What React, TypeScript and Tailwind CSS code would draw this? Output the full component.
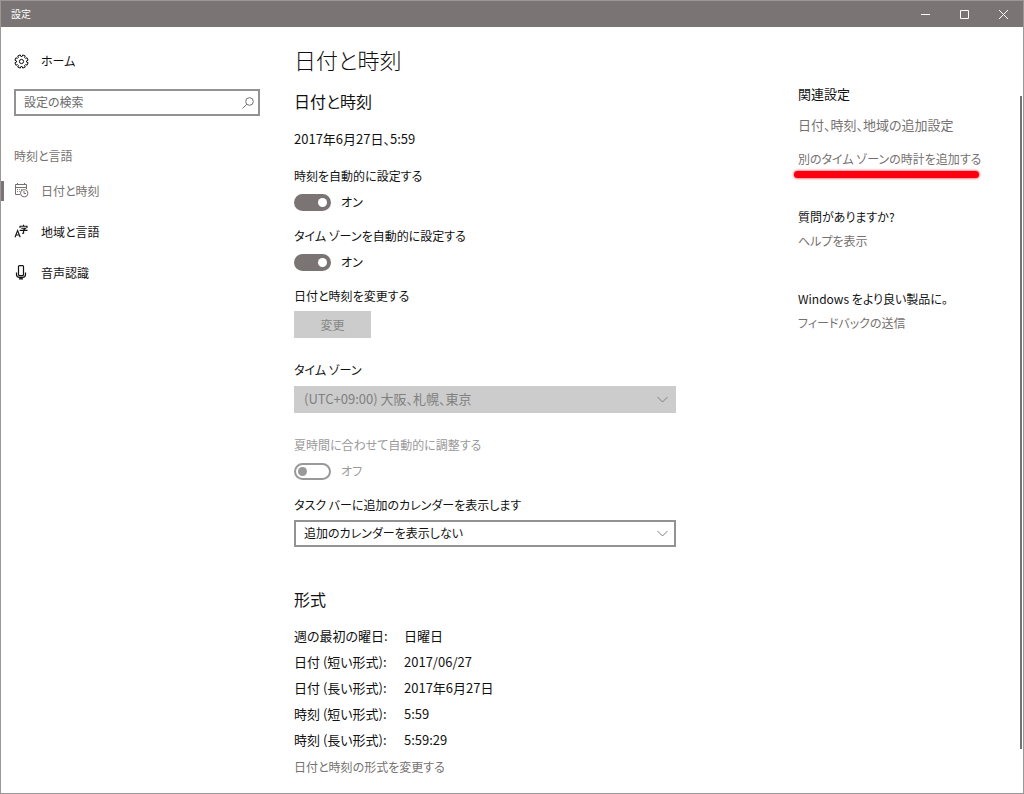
import React, { useState } from 'react';
import clsx from 'clsx';

const navItems = [
  { id: 'datetime', label: '日付と時刻', icon: CalendarClockIcon },
  { id: 'region', label: '地域と言語', icon: LanguageIcon },
  { id: 'speech', label: '音声認識', icon: MicIcon },
];

const formats = [
  { label: '週の最初の曜日:', value: '日曜日' },
  { label: '日付 (短い形式):', value: '2017/06/27' },
  { label: '日付 (長い形式):', value: '2017年6月27日' },
  { label: '時刻 (短い形式):', value: '5:59' },
  { label: '時刻 (長い形式):', value: '5:59:29' },
];

// Eight flat teeth, four points each
const gearPoints = Array.from({ length: 8 }, (_, i) =>
  [
    [-0.27, 5.1],
    [-0.2, 6.7],
    [0.2, 6.7],
    [0.27, 5.1],
  ].map(([offset, r]) => {
    const a = (i * Math.PI) / 4 + Math.PI / 8 + offset;
    return `${(7.5 + r * Math.cos(a)).toFixed(2)},${(7.5 + r * Math.sin(a)).toFixed(2)}`;
  }).join(' ')
).join(' ');

function GearIcon() {
  return (
    <svg width="15" height="15" viewBox="0 0 15 15" fill="none" stroke="currentColor" strokeLinejoin="round">
      <polygon points={gearPoints} />
      <circle cx="7.5" cy="7.5" r="2.1" />
    </svg>
  );
}

function CalendarClockIcon() {
  return (
    <svg width="15" height="15" viewBox="0 0 15 15" fill="none" stroke="currentColor">
      <path d="M6 11.5H1.5v-10h11V6M1.5 4.5h11M3.5 0v2M10.5 0v2" />
      <path d="M3 6.5h1M5 6.5h1M7 6.5h1M3 8.5h1M5 8.5h1" strokeWidth="0.8" />
      <circle cx="10.2" cy="10.2" r="3.7" />
      <path d="M10 8v2.5h2" />
    </svg>
  );
}

function LanguageIcon() {
  return (
    <svg width="15" height="15" viewBox="0 0 15 15" fill="none" stroke="currentColor">
      <path d="M1 13.2 3.6 6.5 6.2 13.2M1.9 11h3.4" strokeWidth="1.1" />
      <path d="M6 3.9V2.3h7v1.6M9.5.8v1.5M7.3 4.3h4.2L9.6 5.8M5.7 6.4h7.8M9.6 5.8v3.4H8" strokeWidth="1.1" />
    </svg>
  );
}

function MicIcon() {
  return (
    <svg width="15" height="15" viewBox="0 0 15 15" fill="none" stroke="currentColor" strokeWidth="1.2">
      <rect x="4.5" y="0.6" width="5" height="10" rx="1" />
      <path d="M2.5 7.5v2q0 2.8 3 2.8h3q3 0 3-2.8v-2M7 12.3v1.7M5 13.8h4" />
    </svg>
  );
}

function ChevronIcon() {
  return (
    <svg
      className="absolute right-2 top-2 pointer-events-none text-[#808080]"
      width="11"
      height="11"
      viewBox="0 0 11 11"
      fill="none"
      stroke="currentColor"
    >
      <path d="M0.5 3 5.5 8l5-5" />
    </svg>
  );
}

function Toggle({ label, defaultOn = false, disabled = false }: { label: string; defaultOn?: boolean; disabled?: boolean }) {
  const [on, setOn] = useState(defaultOn);

  return (
    <label className={clsx('block text-[12px] leading-5', disabled && 'text-[#999999]')}>
      <span className="block">{label}</span>
      <span className="mt-1.5 flex h-5 items-center gap-2.5">
        <input
          type="checkbox"
          role="switch"
          checked={on}
          disabled={disabled}
          onChange={(e) => setOn(e.target.checked)}
          className="flex h-[17px] w-[37px] appearance-none items-center rounded-full border-2 border-[#999999] px-0.5 before:size-[9px] before:rounded-full before:bg-[#999999] checked:justify-end checked:border-[#7a7574] checked:bg-[#7a7574] checked:before:bg-white"
        />
        <span>{on ? 'オン' : 'オフ'}</span>
      </span>
    </label>
  );
}

export default function App() {
  const [active, setActive] = useState('datetime');

  return (
    <div className="flex min-h-screen flex-col border border-[#9a9796] bg-white font-['Noto_Sans_CJK_JP',sans-serif] text-[13px] leading-5 text-[#111111] [font-feature-settings:'palt']">
      <header className="flex h-[26px] items-center justify-between bg-[#7a7574] pl-2.5 text-white">
        <span className="text-[10px]">設定</span>
        <div className="flex h-full">
          <button aria-label="最小化" className="flex w-[39px] items-center justify-center">
            <svg width="9" height="9" viewBox="0 0 9 9" stroke="currentColor">
              <path d="M0 4.5h9" />
            </svg>
          </button>
          <button aria-label="最大化" className="flex w-[39px] items-center justify-center">
            <svg width="9" height="9" viewBox="0 0 9 9" fill="none" stroke="currentColor">
              <path d="M0.5 0.5h8v8h-8z" />
            </svg>
          </button>
          <button aria-label="閉じる" className="flex w-[39px] items-center justify-center">
            <svg width="9" height="9" viewBox="0 0 9 9" stroke="currentColor">
              <path d="m0 0 9 9M9 0 0 9" />
            </svg>
          </button>
        </div>
      </header>

      <div className="flex flex-1">
        {/* Sidebar */}
        <nav className="w-[259px] shrink-0 pt-3.5">
          <a href="#home" className="flex h-10 items-center gap-3 pl-[13px] text-[12px]">
            <GearIcon />
            ホーム
          </a>
          <div className="relative mt-2 ml-[13px]">
            <input
              type="text"
              aria-label="設定の検索"
              placeholder="設定の検索"
              className="block h-[27px] w-full border-2 border-[#929292] pl-2 pr-7 pb-0.5 text-[12px] placeholder:text-[#6a6a6a]"
            />
            <svg
              className="absolute right-1.5 top-2 text-[#707070]"
              width="12"
              height="12"
              viewBox="0 0 12 12"
              fill="none"
              stroke="currentColor"
            >
              <circle cx="7.5" cy="4.5" r="3.8" />
              <path d="M4.8 7.2.5 11.5" />
            </svg>
          </div>
          <h2 className="mt-[30px] pl-[13px] text-[12px] leading-5 text-[#767170]">時刻と言語</h2>
          <ul className="mt-1">
            {navItems.map(({ id, label, icon: Icon }) => (
              <li key={id}>
                <a
                  href={`#${id}`}
                  onClick={() => setActive(id)}
                  className={clsx('flex h-[41px] items-center text-[12px]', active === id && 'text-[#767170]')}
                >
                  <span className={clsx('mr-2.5 h-5 w-[3px]', active === id && 'bg-[#7a7574]')} />
                  <Icon />
                  <span className="ml-3">{label}</span>
                </a>
              </li>
            ))}
          </ul>
        </nav>

        {/* Date & time settings */}
        <main className="flex-1 pt-4 pb-3 pl-[34px]">
          <h1 className="text-[22px] leading-8 font-light">日付と時刻</h1>
          <h2 className="mt-3.5 text-[16px] leading-6">日付と時刻</h2>
          <div className="max-w-[382px]">
            <p className="mt-4 mb-[17px]">2017年6月27日、5:59</p>
            <div className="flex flex-col gap-3.5">
              <Toggle label="時刻を自動的に設定する" defaultOn />
              <Toggle label="タイム ゾーンを自動的に設定する" defaultOn />
              <div className="text-[12px] leading-5">
                <p id="change-label">日付と時刻を変更する</p>
                <button
                  disabled
                  aria-describedby="change-label"
                  className="mt-[5px] block h-[27px] w-[77px] bg-[#cccccc] text-[#858585]"
                >
                  変更
                </button>
              </div>
            </div>

            <label htmlFor="timezone" className="mt-[22px] block text-[12px] leading-5">タイム ゾーン</label>
            <div className="relative mt-1.5">
              <select
                id="timezone"
                disabled
                className="block h-[27px] w-full appearance-none bg-[#cccccc] px-2.5 pb-0.5 text-[#808080] opacity-100"
              >
                <option>(UTC+09:00) 大阪、札幌、東京</option>
              </select>
              <ChevronIcon />
            </div>

            <div className="mt-[22px] mb-3.5">
              <Toggle label="夏時間に合わせて自動的に調整する" disabled />
            </div>

            <label htmlFor="calendar" className="block text-[12px] leading-5">タスク バーに追加のカレンダーを表示します</label>
            <div className="relative mt-[5px]">
              <select
                id="calendar"
                className="block h-[27px] w-full appearance-none border-2 border-[#929292] bg-white px-2 pb-0.5 text-[12px]"
              >
                <option>追加のカレンダーを表示しない</option>
              </select>
              <ChevronIcon />
            </div>
          </div>

          <h2 className="mt-10 text-[16px] leading-6">形式</h2>
          <table className="mt-3">
            <tbody>
              {formats.map((row) => (
                <tr key={row.label} className="h-[26px]">
                  <th scope="row" className="w-[110px] p-0 text-left font-normal">{row.label}</th>
                  <td className="p-0">{row.value}</td>
                </tr>
              ))}
            </tbody>
          </table>
          <a href="#formats" className="mt-px flex h-[26px] items-center text-[12px] text-[#767170]">日付と時刻の形式を変更する</a>
        </main>

        {/* Related links */}
        <aside className="w-[222px] shrink-0 pt-[57px] text-[12px] leading-5">
          <h3 className="text-[13px] leading-5">関連設定</h3>
          <a href="#additional" className="mt-[11px] block text-[13px] leading-5 text-[#767170]">日付、時刻、地域の追加設定</a>
          <a href="#clocks" className="relative mt-3.5 block w-fit text-[#767170]">
            別のタイム ゾーンの時計を追加する
            <span className="absolute -left-1 right-0.5 top-[22px] h-[7px] rounded-full bg-[#fb0010] shadow-[0_0_3px_#fb0010]" />
          </a>
          <h3 className="mt-[38px]">質問がありますか?</h3>
          <a href="#help" className="mt-1 block text-[#767170]">ヘルプを表示</a>
          <h3 className="mt-[38px]">Windows をより良い製品に。</h3>
          <a href="#feedback" className="mt-1 block text-[#767170]">フィードバックの送信</a>
        </aside>
        <div className="mt-[69px] mr-px mb-11 w-0.5 bg-[#737373]" />
      </div>
    </div>
  );
}
